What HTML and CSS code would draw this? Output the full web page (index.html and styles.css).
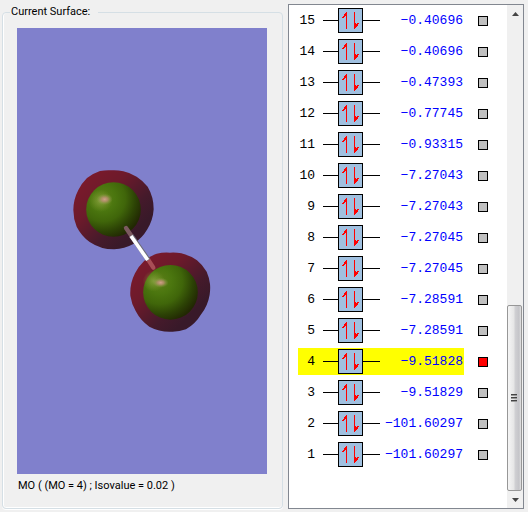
FILE: index.html
```html
<!DOCTYPE html>
<html lang="en">
<head>
<meta charset="utf-8">
<title>MO Viewer</title>
<link rel="stylesheet" href="styles.css">
</head>
<body>
<fieldset class="surface">
  <legend>Current Surface:</legend>
  <svg class="view" viewBox="0 0 250 446" role="img" aria-label="Molecular orbital surface">
    <defs>
      <linearGradient id="cloud" x1="0.15" y1="0.1" x2="0.8" y2="0.75">
        <stop offset="0" stop-color="#7a1a2b"/>
        <stop offset="0.35" stop-color="#6d1a2b"/>
        <stop offset="0.75" stop-color="#451a2b"/>
        <stop offset="1" stop-color="#381929"/>
      </linearGradient>
      <radialGradient id="atom" cx="0.3" cy="0.3" r="0.76">
        <stop offset="0" stop-color="#5c7e18"/>
        <stop offset="0.3" stop-color="#4b760f"/>
        <stop offset="0.55" stop-color="#40660a"/>
        <stop offset="0.8" stop-color="#2c4205"/>
        <stop offset="1" stop-color="#222803"/>
      </radialGradient>
      <radialGradient id="shine">
        <stop offset="0" stop-color="#d0a08a"/>
        <stop offset="0.4" stop-color="#b89070" stop-opacity="0.8"/>
        <stop offset="1" stop-color="#82a040" stop-opacity="0"/>
      </radialGradient>
      <radialGradient id="glow">
        <stop offset="0" stop-color="#90a848" stop-opacity="0.75"/>
        <stop offset="1" stop-color="#80a030" stop-opacity="0"/>
      </radialGradient>
    </defs>
    <g transform="translate(43 132) scale(0.33333)">
      <path fill="url(#cloud)" d="M120 33A130 130 0 0 1 158 31A130 130 0 0 1 190 34A130 130 0 0 1 230 50A130 130 0 0 1 263 80A130 130 0 0 1 281 148A130 130 0 0 1 262 208A130 130 0 0 1 220 252A130 130 0 0 1 163 268A130 130 0 0 1 89 246A130 130 0 0 1 50 200A130 130 0 0 1 40 150A130 130 0 0 1 55 90A130 130 0 0 1 81 54A130 130 0 0 1 120 33Z"/>
      <path fill="url(#cloud)" d="M290 281A130 130 0 0 1 330 278A130 130 0 0 1 364 280A130 130 0 0 1 411 301A130 130 0 0 1 440 335A130 130 0 0 1 450 372A130 130 0 0 1 449 404A130 130 0 0 1 424 462A130 130 0 0 1 378 508A130 130 0 0 1 338 515A130 130 0 0 1 268 500A130 130 0 0 1 227 453A130 130 0 0 1 211 407A130 130 0 0 1 225 340A130 130 0 0 1 253 302A130 130 0 0 1 290 281Z"/>
      <circle cx="160.500" cy="148.500" r="82" fill="url(#atom)"/>
      <circle cx="331.500" cy="397" r="82" fill="url(#atom)"/>
      <ellipse cx="122" cy="122" rx="36" ry="34" fill="url(#glow)"/>
      <ellipse cx="134" cy="118" rx="24" ry="17" fill="url(#shine)"/>
      <ellipse cx="281" cy="363" rx="33" ry="32" fill="url(#glow)"/>
      <ellipse cx="302" cy="368" rx="24" ry="15" fill="url(#shine)"/>
      <path d="M198 204L216 230" stroke="#7c5a60" stroke-width="13" stroke-linecap="round"/>
      <path d="M264 298L280 323" stroke="#a94e56" stroke-width="13" stroke-linecap="round"/>
      <path d="M214 227L265 300" stroke="#6a6a76" stroke-width="14"/>
      <path d="M213 228L263 300" stroke="#fff" stroke-width="11"/>
    </g>
  </svg>
  <p class="caption">MO ( (MO = 4) ; Isovalue = 0.02 )</p>
</fieldset>

<svg class="defs" aria-hidden="true">
  <symbol id="pair" viewBox="0 0 57 25">
    <path fill="#000" d="M0 12h15v1H0zM40 12h17v1H40z"/>
    <path fill="#000" d="M15 0h25v25H15z"/>
    <path fill="#a0c0e0" d="M16 1h23v23H16z"/>
    <path fill="#f00" d="M23 4h1v17h-1zM22 5h1v3h-1zM21 6h1v3h-1zM20 8h1v2h-1zM19 9h1v1h-1z"/>
    <path fill="#f00" d="M31 4h1v17h-1zM32 15h1v5h-1zM33 16h1v3h-1zM34 15h1v3h-1zM35 15h1v1h-1z"/>
  </symbol>
</svg>

<main class="levels">
  <ol class="rows">
    <li><label class="level" for="m15"><span class="num">15</span><svg class="pair"><use href="#pair"/></svg><span class="energy">−0.40696</span></label><input id="m15" type="checkbox"></li>
    <li><label class="level" for="m14"><span class="num">14</span><svg class="pair"><use href="#pair"/></svg><span class="energy">−0.40696</span></label><input id="m14" type="checkbox"></li>
    <li><label class="level" for="m13"><span class="num">13</span><svg class="pair"><use href="#pair"/></svg><span class="energy">−0.47393</span></label><input id="m13" type="checkbox"></li>
    <li><label class="level" for="m12"><span class="num">12</span><svg class="pair"><use href="#pair"/></svg><span class="energy">−0.77745</span></label><input id="m12" type="checkbox"></li>
    <li><label class="level" for="m11"><span class="num">11</span><svg class="pair"><use href="#pair"/></svg><span class="energy">−0.93315</span></label><input id="m11" type="checkbox"></li>
    <li><label class="level" for="m10"><span class="num">10</span><svg class="pair"><use href="#pair"/></svg><span class="energy">−7.27043</span></label><input id="m10" type="checkbox"></li>
    <li><label class="level" for="m9"><span class="num">9</span><svg class="pair"><use href="#pair"/></svg><span class="energy">−7.27043</span></label><input id="m9" type="checkbox"></li>
    <li><label class="level" for="m8"><span class="num">8</span><svg class="pair"><use href="#pair"/></svg><span class="energy">−7.27045</span></label><input id="m8" type="checkbox"></li>
    <li><label class="level" for="m7"><span class="num">7</span><svg class="pair"><use href="#pair"/></svg><span class="energy">−7.27045</span></label><input id="m7" type="checkbox"></li>
    <li><label class="level" for="m6"><span class="num">6</span><svg class="pair"><use href="#pair"/></svg><span class="energy">−7.28591</span></label><input id="m6" type="checkbox"></li>
    <li><label class="level" for="m5"><span class="num">5</span><svg class="pair"><use href="#pair"/></svg><span class="energy">−7.28591</span></label><input id="m5" type="checkbox"></li>
    <li><label class="level current" for="m4"><span class="num">4</span><svg class="pair"><use href="#pair"/></svg><span class="energy">−9.51828</span></label><input id="m4" type="checkbox" checked></li>
    <li><label class="level" for="m3"><span class="num">3</span><svg class="pair"><use href="#pair"/></svg><span class="energy">−9.51829</span></label><input id="m3" type="checkbox"></li>
    <li><label class="level" for="m2"><span class="num">2</span><svg class="pair"><use href="#pair"/></svg><span class="energy">−101.60297</span></label><input id="m2" type="checkbox"></li>
    <li><label class="level" for="m1"><span class="num">1</span><svg class="pair"><use href="#pair"/></svg><span class="energy">−101.60297</span></label><input id="m1" type="checkbox"></li>
  </ol>
  <div class="scrollbar">
    <button type="button" class="step" aria-label="Scroll up"><svg width="7" height="4" viewBox="0 0 7 4"><path d="M0 4L3.500 0L7 4Z" fill="#444"/></svg></button>
    <div class="track"></div>
    <div class="thumb"><svg width="7" height="8" viewBox="0 0 7 8"><path d="M0 0h6v1H0zM0 3h6v1H0zM0 6h6v1H0z" fill="#444"/><path d="M0 1h6v1H0zM0 4h6v1H0zM0 7h6v1H0z" fill="#999"/></svg></div>
    <button type="button" class="step" aria-label="Scroll down"><svg width="7" height="4" viewBox="0 0 7 4"><path d="M0 0L3.500 4L7 0Z" fill="#444"/></svg></button>
  </div>
</main>
</body>
</html>
```

FILE: styles.css
```css
* {
  box-sizing: border-box;
}

body {
  display: grid;
  grid-template-columns: 281fr 236fr;
  gap: 5px;
  min-height: 100vh;
  margin: 0;
  padding: 4px 4px 3px 2px;
  background: #f0f0f0;
  color: #000;
  font: 11px/16px Roboto, "Liberation Sans", Arial, sans-serif;
}

.defs {
  display: none;
}

.surface {
  display: flex;
  flex-direction: column;
  min-width: 0;
  margin: 0;
  padding: 8px 15px 14px 14px;
  border: 1px solid #d5dfe5;
  border-radius: 4px;
  box-shadow: inset 0 -1px #fff, inset 1px 0 #fff, 0 1px #fff;
}

.surface legend {
  margin-left: -7px;
  padding: 0 8px 0 1px;
}

.view {
  flex: 1 1 0;
  width: 100%;
  min-height: 0;
  background: #8080cc;
}

.caption {
  margin: 4px 0 0 1px;
}

.levels {
  display: flex;
  border: 1px solid #828790;
  background: #fff;
}

.rows {
  flex: 1;
  margin: 0;
  padding: 0 19px 0 9px;
  list-style: none;
  font: 13px/27px "Liberation Mono", "Courier New", monospace;
}

.rows li {
  display: flex;
  align-items: center;
  gap: 14px;
  height: 31px;
}

.level {
  display: flex;
  flex: 1;
  align-items: center;
  height: 27px;
  padding-right: 1px;
}

.current {
  background: #ff0;
}

.num {
  width: 17px;
  margin-right: 8px;
  text-align: right;
}

.pair {
  width: 57px;
  height: 25px;
}

.energy {
  flex: 1;
  color: #00f;
  text-align: right;
}

.rows input {
  appearance: none;
  width: 10px;
  height: 10px;
  margin: 0;
  border: 1px solid #000;
  background: #c0c0c0;
}

.rows input:checked {
  background: #f00;
}

.scrollbar {
  display: flex;
  flex-direction: column;
  width: 16px;
  background: #f0f0f0;
}

.step {
  display: flex;
  align-items: center;
  justify-content: center;
  height: 17px;
  padding: 0;
  border: 0;
  background: none;
}

.track {
  flex: 284 1 0;
}

.thumb {
  display: flex;
  flex: 184 1 0;
  align-items: center;
  justify-content: center;
  margin-right: 1px;
  border: 1px solid #979797;
  border-radius: 2px;
  background: linear-gradient(90deg, #f5f5f5, #e6e6e6 45%, #d0d0d3 55%, #c4c4c8 85%, #e4e4e4);
}
```
